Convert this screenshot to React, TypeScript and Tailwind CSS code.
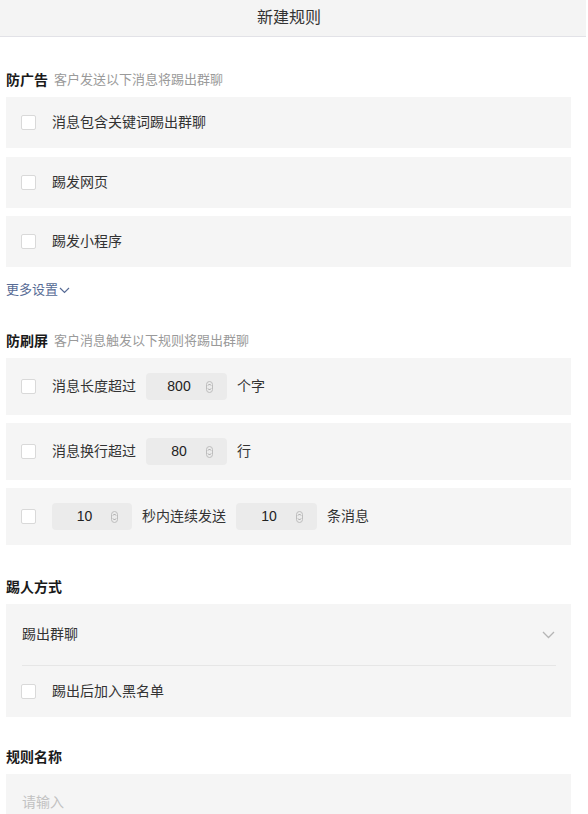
import React from 'react';

const font = {
  fontFamily: '"Liberation Sans", "Noto Sans CJK SC", sans-serif',
};

function Checkbox() {
  return <span className="block w-[15px] h-[15px] shrink-0 rounded-[2px] border border-[#d9d9d9] bg-white" />;
}

function Spinner() {
  return (
    <svg width="7" height="12" viewBox="0 0 7 12" className="shrink-0">
      <rect x="0.5" y="0.5" width="6" height="11" rx="3" fill="none" stroke="#bdbdbd" />
      <path d="M2 4.5 L3.5 3 L5 4.5" fill="none" stroke="#999" strokeWidth="0.9" />
      <path d="M2 7.5 L3.5 9 L5 7.5" fill="none" stroke="#999" strokeWidth="0.9" />
    </svg>
  );
}

function NumberBox({ value, w = 'w-[81px]' }: { value: string; w?: string }) {
  return (
    <div className={`${w} h-[27px] rounded-[4px] bg-[#ebebeb] flex items-center pl-3 pr-[14px] gap-1.5`}>
      <span className="flex-1 text-center text-[14px] text-[#222]">{value}</span>
      <Spinner />
    </div>
  );
}

function SectionTitle({ title, sub }: { title: string; sub?: string }) {
  return (
    <div className="h-5 flex items-center leading-5 mb-[7px]">
      <span className="text-[14px] font-bold text-[#1a1a1a]">{title}</span>
      {sub && <span className="ml-[6px] text-[13px] text-[#9a9a9a]">{sub}</span>}
    </div>
  );
}

function CheckRow({ children, tall }: { children: React.ReactNode; tall?: boolean }) {
  return (
    <div className={`${tall ? 'h-[57px]' : 'h-[51px]'} bg-[#f5f5f5] flex items-center pl-[15px] text-[14px] text-[#333]`}>
      <Checkbox />
      <div className="ml-4 flex items-center gap-2.5">{children}</div>
    </div>
  );
}

export default function App() {
  return (
    <div className="w-[586px] bg-white min-h-[814px]" style={font}>
      {/* Header */}
      <div className="h-[37px] bg-[#f4f4f4] border-b border-[#e2e2e7] flex items-center justify-center pr-2">
        <span className="text-[16px] text-[#333] leading-5">新建规则</span>
      </div>

      <div className="pl-[6px] pr-[15px] pt-[33px]">
        {/* 防广告 */}
        <SectionTitle title="防广告" sub="客户发送以下消息将踢出群聊" />
        <div className="flex flex-col gap-[8.5px]">
          <CheckRow>消息包含关键词踢出群聊</CheckRow>
          <CheckRow>踢发网页</CheckRow>
          <CheckRow>踢发小程序</CheckRow>
        </div>
        <div className="mt-[13px] h-5 flex items-center text-[13px] text-[#576b95]">
          更多设置
          <svg width="11" height="7" viewBox="0 0 11 7" className="ml-[1px]">
            <path d="M1 1 L5.5 5.5 L10 1" fill="none" stroke="#576b95" strokeWidth="1.2" />
          </svg>
        </div>

        {/* 防刷屏 */}
        <div className="mt-[31px]">
          <SectionTitle title="防刷屏" sub="客户消息触发以下规则将踢出群聊" />
        </div>
        <div className="flex flex-col gap-2">
          <CheckRow tall>
            <span>消息长度超过</span>
            <NumberBox value="800" />
            <span>个字</span>
          </CheckRow>
          <CheckRow tall>
            <span>消息换行超过</span>
            <NumberBox value="80" />
            <span>行</span>
          </CheckRow>
          <CheckRow tall>
            <NumberBox value="10" w="w-[80px]" />
            <span>秒内连续发送</span>
            <NumberBox value="10" />
            <span>条消息</span>
          </CheckRow>
        </div>

        {/* 踢人方式 */}
        <div className="mt-[32px]">
          <SectionTitle title="踢人方式" />
        </div>
        <div className="bg-[#f5f5f5] px-4 pr-[15px]">
          <div className="h-[62px] flex items-center justify-between border-b border-[#e6e6e6] text-[14px] text-[#333]">
            <span>踢出群聊</span>
            <svg width="13" height="8" viewBox="0 0 13 8" className="mr-[1px]">
              <path d="M1 1 L6.5 6.5 L12 1" fill="none" stroke="#b5b5b5" strokeWidth="1.3" />
            </svg>
          </div>
          <div className="h-[51px] flex items-center -ml-px text-[14px] text-[#333]">
            <Checkbox />
            <span className="ml-4">踢出后加入黑名单</span>
          </div>
        </div>

        {/* 规则名称 */}
        <div className="mt-[30px]">
          <SectionTitle title="规则名称" />
        </div>
        <div className="h-[57px] bg-[#f5f5f5] flex items-center px-4 text-[14px] text-[#c2c2c2]">
          请输入
        </div>
      </div>
    </div>
  );
}
